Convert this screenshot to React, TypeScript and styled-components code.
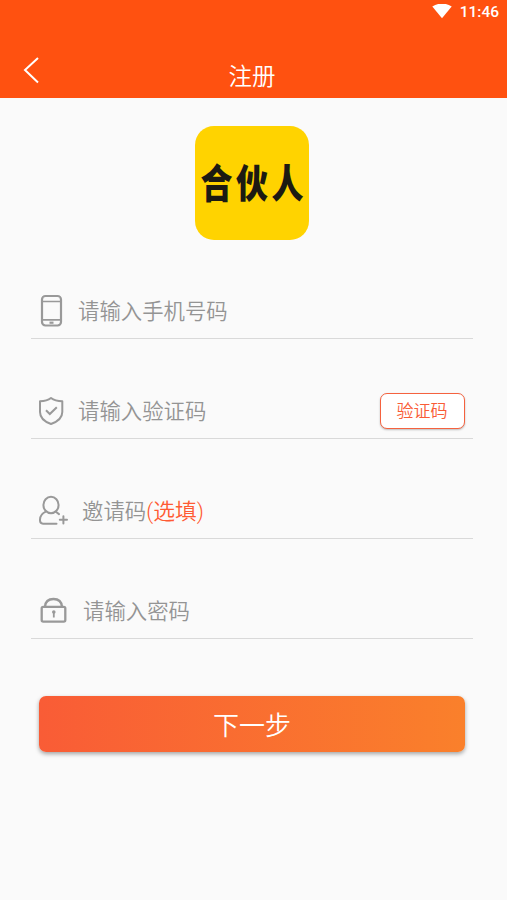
import React from "react";
import styled, { createGlobalStyle } from "styled-components";

const GlobalStyle = createGlobalStyle`
  * { box-sizing: border-box; }
  body {
    margin: 0;
    background: #fafafa;
    font-family: Roboto, "Noto Sans CJK SC", sans-serif;
  }
`;

const Screen = styled.main`
  display: flex;
  flex-direction: column;
  width: 507px;
  height: 900px;
  overflow: hidden;
  background: #fafafa;
`;

const Header = styled.header`
  height: 98px;
  flex: none;
  background: #ff5110;
  color: #fff;
`;

const StatusBar = styled.div`
  display: flex;
  justify-content: flex-end;
  align-items: center;
  gap: 8px;
  height: 24px;
  padding-right: 8px;
  font-size: 15.5px;
  font-weight: 500;
  line-height: 24px;
`;

const TitleBar = styled.div`
  display: grid;
  grid-template-columns: 60px 1fr 60px;
  height: 74px;
  padding-right: 3px;
`;

const BackButton = styled.button`
  display: flex;
  align-items: flex-start;
  padding: 32px 0 0 23px;
  border: 0;
  background: none;
  color: inherit;
`;

const Title = styled.h1`
  margin: 0;
  padding-top: 38px;
  font-size: 23.5px;
  font-weight: 350;
  line-height: 30px;
  text-align: center;
`;

const Logo = styled.div`
  display: flex;
  align-items: center;
  justify-content: center;
  flex: none;
  width: 114px;
  height: 114px;
  margin: 28px 0 0 195px;
  border-radius: 19px;
  background: #ffd300;
`;

const LogoText = styled.span`
  color: #1c1a12;
  font-family: "Noto Sans CJK SC", sans-serif;
  font-size: 32px;
  font-weight: 900;
  letter-spacing: 3.5px;
  line-height: 40px;
  margin-right: -3.5px;
  white-space: nowrap;
  transform: translateY(-2px) scaleY(1.24);
`;

const Form = styled.form`
  display: flex;
  flex-direction: column;
  margin-top: -1px;
  padding: 0 34px 0 31px;
`;

const Field = styled.label`
  display: flex;
  align-items: flex-end;
  height: 100px;
  padding: 0 8px 8px 5px;
  border-bottom: 1px solid #d9d9d9;
`;

const IconSlot = styled.span<{ $width: number }>`
  display: flex;
  align-items: center;
  flex: none;
  width: ${(p) => p.$width}px;
  height: 38px;
`;

const Hint = styled.span`
  flex: 1;
  margin-bottom: -1px;
  color: #949494;
  font-size: 21.4px;
  font-weight: 350;
  line-height: 38px;
  white-space: nowrap;
`;

const Optional = styled.span`
  color: #ff5a33;
  font-size: 21.8px;
`;

const CodeButton = styled.button`
  width: 85px;
  height: 36px;
  margin-bottom: 1px;
  padding: 0 1px 0 0;
  border: 1px solid #f5623f;
  border-radius: 7px;
  background: #fff;
  box-shadow: 0 1px 2px rgba(0, 0, 0, 0.25);
  color: #f95c36;
  font: 350 17px/33px Roboto, "Noto Sans CJK SC", sans-serif;
`;

const Submit = styled.button`
  height: 56px;
  margin: 57px 8px 0;
  padding: 4px 0 0;
  border: 0;
  border-radius: 7px;
  background: linear-gradient(90deg, #f95c36, #fa802b);
  box-shadow: 0 2px 4px rgba(0, 0, 0, 0.35);
  color: #fff;
  font: 350 26px/52px Roboto, "Noto Sans CJK SC", sans-serif;
`;

const WifiIcon = () => (
  <svg width="20" height="16" viewBox="0 0 20 16" fill="#fff">
    <path d="M0.3 2.6Q10-3.6 19.7 2.6L10 14.2Z" />
  </svg>
);

const BackIcon = () => (
  <svg width="17" height="28" viewBox="0 0 17 28" fill="none" stroke="#fff" strokeWidth="2">
    <path d="M15 2L2 14L15 26.5" />
  </svg>
);

const PhoneIcon = () => (
  <svg width="32" height="34" viewBox="0 0 32 34" fill="none" stroke="#999" strokeWidth="2.2">
    <rect x="6" y="2" width="19" height="29.5" rx="3.5" />
    <path d="M6 7.5H25M6 25.8H25" strokeWidth="1.7" />
    <path d="M13.5 28.7H17.5" />
  </svg>
);

const ShieldIcon = () => (
  <svg width="32" height="34" viewBox="0 0 32 34" fill="none" stroke="#999" strokeWidth="2">
    <path d="M15 4C12 6.3 8 7.2 4 7.3V18C4 24 8.5 27.7 15 30C21.5 27.7 26.3 24 26.3 18V7.3C22 7.2 18 6.3 15 4Z" strokeLinejoin="round" />
    <path d="M10 16.3L13.8 20L20.8 13.2" />
  </svg>
);

const InviteIcon = () => (
  <svg width="34" height="34" viewBox="0 0 34 34" fill="none" stroke="#999" strokeWidth="2" strokeLinecap="round">
    <ellipse cx="15" cy="11" rx="7.6" ry="8.2" />
    <path d="M9.8 17.6C5.5 19.6 4 22 4 25.6V26.6Q4 29.7 7 29.7H20.5" />
    <path d="M19.8 17.8L23 20.1M23.8 25.8H31M27.4 22.2V29.4" />
  </svg>
);

const LockIcon = () => (
  <svg width="34" height="34" viewBox="0 0 34 34" fill="none" stroke="#999" strokeWidth="2.3">
    <rect x="5.7" y="12.8" width="23.6" height="14.8" rx="1.5" />
    <path d="M9 12.8C9.3 7.6 12.5 5 17.5 5S25.6 7.6 26 12.8" />
    <circle cx="17.8" cy="18" r="1.8" fill="#999" stroke="none" />
    <path d="M17.8 18V23.5" strokeWidth="1.8" />
  </svg>
);

export default function App() {
  return (
    <>
      <GlobalStyle />
      <Screen>
        <Header>
          <StatusBar>
            <WifiIcon />
            <span>11:46</span>
          </StatusBar>
          <TitleBar>
            <BackButton aria-label="返回"><BackIcon /></BackButton>
            <Title>注册</Title>
          </TitleBar>
        </Header>
        <Logo><LogoText>合伙人</LogoText></Logo>
        <Form>
          <Field>
            <IconSlot $width={42}><PhoneIcon /></IconSlot>
            <Hint>请输入手机号码</Hint>
          </Field>
          <Field>
            <IconSlot $width={42}><ShieldIcon /></IconSlot>
            <Hint>请输入验证码</Hint>
            <CodeButton type="button">验证码</CodeButton>
          </Field>
          <Field>
            <IconSlot $width={46}><InviteIcon /></IconSlot>
            <Hint>邀请码<Optional>(选填)</Optional></Hint>
          </Field>
          <Field>
            <IconSlot $width={47}><LockIcon /></IconSlot>
            <Hint>请输入密码</Hint>
          </Field>
          <Submit type="button">下一步</Submit>
        </Form>
      </Screen>
    </>
  );
}
